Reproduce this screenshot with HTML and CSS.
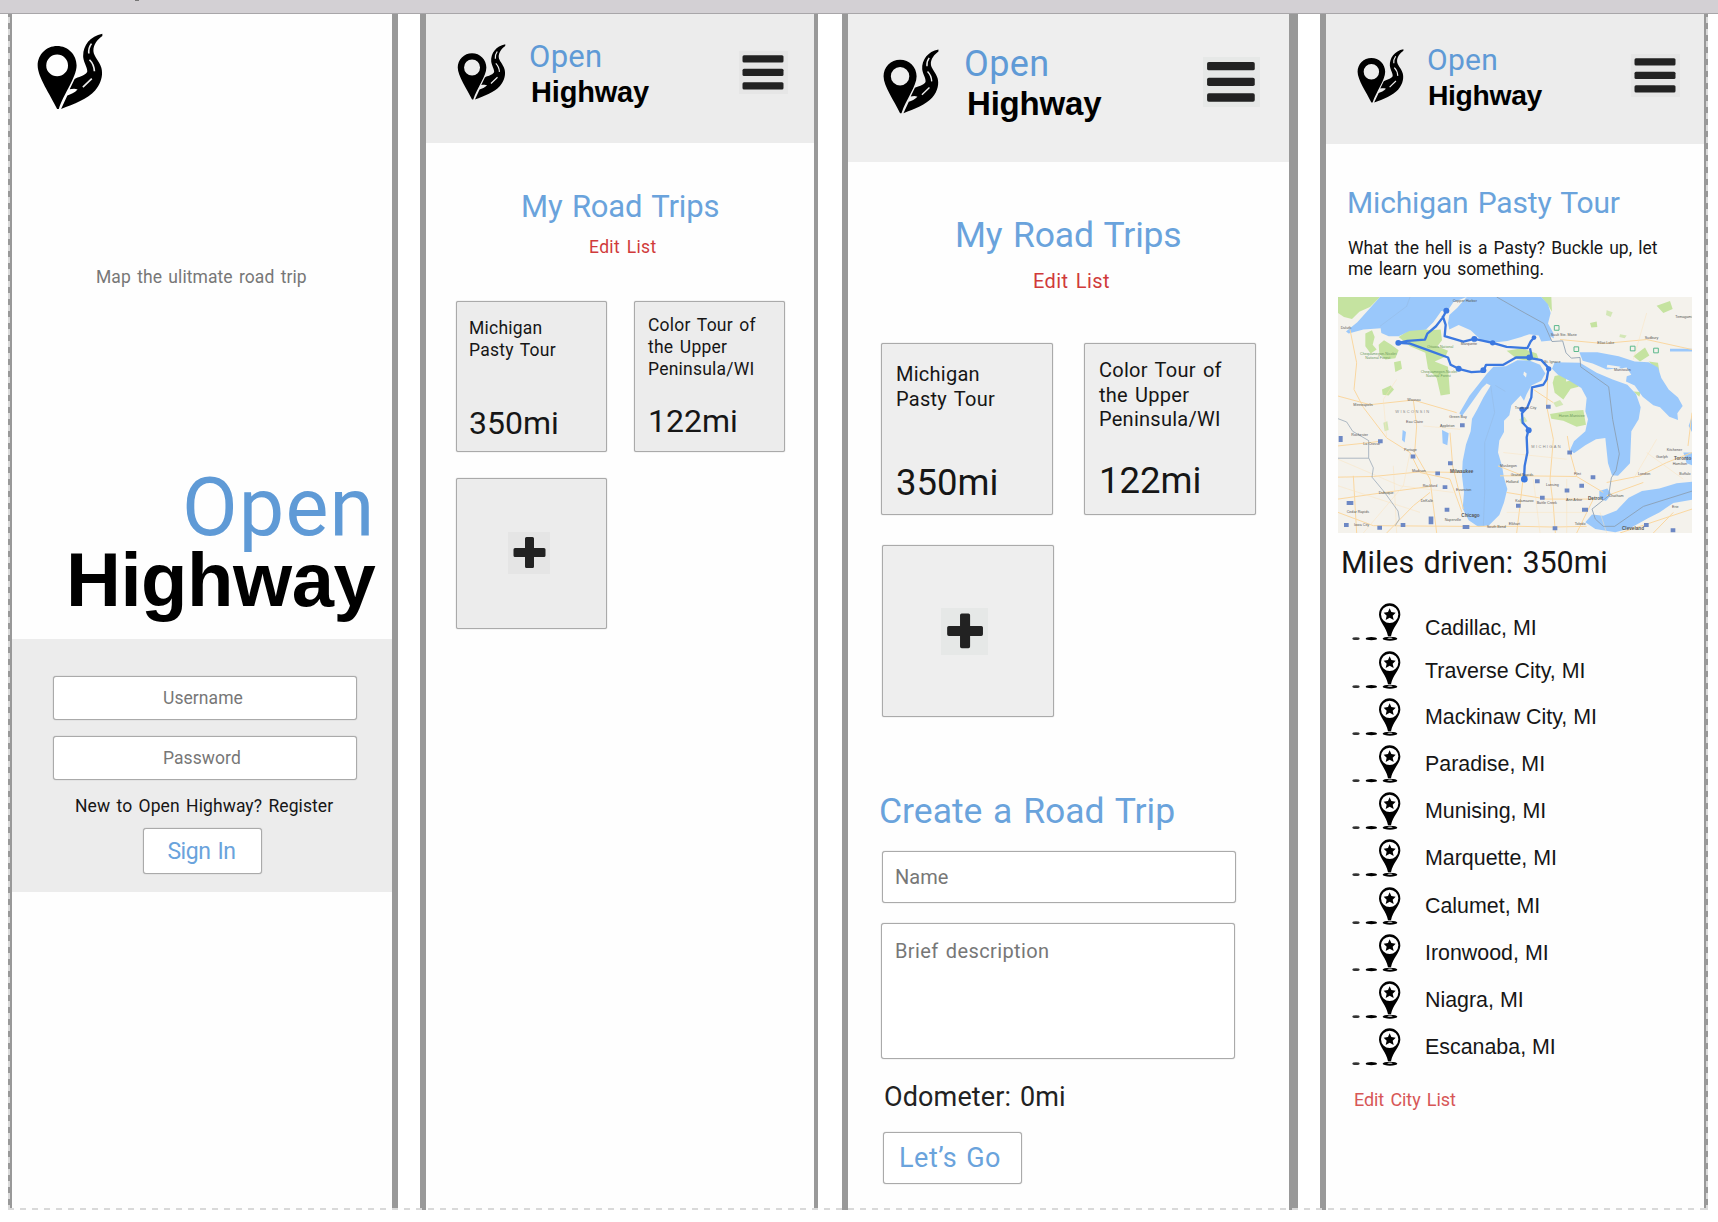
FILE: index.html
```html
<!DOCTYPE html>
<html lang="en">
<head>
<meta charset="utf-8">
<title>Open Highway</title>
<link rel="stylesheet" href="styles.css">
</head>
<body>
<svg class="defs" width="0" height="0">
  <symbol id="logo" viewBox="108 100 200 231">
    <path fill-rule="evenodd" d="M169 138C136 138 110 164 110 197C110 232 148 285 169 329L174 329C190 280 228 233 228 197C228 164 202 138 169 138ZM169 164A33 33 0 1 1 169 230A33 33 0 1 1 169 164Z"/>
    <path d="M306 101C268 108 246 138 248 172C250 190 262 204 260 217C252 230 232 232 222 238L207 269C214 268 224 266 231 270C222 280 210 284 200 288L181 329C220 314 262 298 284 273C305 249 308 222 303 204C297 183 280 170 279 154C278 134 292 118 306 108Z"/>
    <path d="M273 131Q263 145 265 161M267 180Q281 194 282 215M274 237L247 263" fill="none" stroke="#eee" stroke-width="5"/>
  </symbol>
  <symbol id="pin" viewBox="97 40 147 114">
    <path fill-rule="evenodd" d="M210 41A32 33 0 0 0 178 75C179 96 200 112 205 140H214C219 112 241 96 242 75A32 33 0 0 0 210 41ZM210 48A26 26 0 1 1 210 100A26 26 0 1 1 210 48Z"/>
    <path d="M210 56L215 67L228 69L219 78L222 91L210 84L198 91L201 78L192 69L205 67Z"/>
    <ellipse cx="211" cy="147" rx="22" ry="6"/><ellipse cx="211" cy="146" rx="8" ry="2.2" fill="#bbb"/>
    <ellipse cx="155" cy="147" rx="17" ry="5"/><ellipse cx="109" cy="147" rx="11" ry="4" fill="#333"/>
  </symbol>
  <symbol id="menu" viewBox="0 0 49 43">
    <g fill="#222"><rect x="3.500" y="4.300" width="41" height="7.200" rx="1.500"/><rect x="3.500" y="17.800" width="41" height="7.200" rx="1.500"/><rect x="3.500" y="31.200" width="41" height="7.200" rx="1.500"/></g>
  </symbol>
  <symbol id="plus" viewBox="0 0 42 42">
    <path fill="#222" d="M18.500 5h6q1.500 0 1.500 1.500V16h10q1.500 0 1.500 1.500v6q0 1.500-1.500 1.500H26v9.500q0 1.500-1.500 1.500h-6q-1.500 0-1.500-1.500V25H7q-1.500 0-1.500-1.500v-6Q5.500 16 7 16h10V6.500Q17 5 18.500 5Z"/>
  </symbol>
</svg>
<div class="topbar"></div>
<main class="board">
  <section class="phone login">
    <svg class="logo"><use href="#logo"/></svg>
    <p class="tagline">Map the ulitmate road trip</p>
    <h1 class="brand"><span class="open">Open</span><span class="highway">Highway</span></h1>
    <form class="signin">
      <div class="field">Username</div>
      <div class="field">Password</div>
      <p class="register">New to Open Highway? Register</p>
      <button type="button" class="btn">Sign In</button>
    </form>
  </section>

  <section class="phone trips">
    <header class="bar">
      <svg class="logo"><use href="#logo"/></svg>
      <h1 class="brand"><span class="open">Open</span><span class="highway">Highway</span></h1>
      <svg class="menu"><use href="#menu"/></svg>
    </header>
    <h2 class="title">My Road Trips</h2>
    <a class="edit">Edit List</a>
    <div class="cards">
      <article class="card"><p>Michigan<br>Pasty Tour</p><strong>350mi</strong></article>
      <article class="card tall"><p>Color Tour of<br>the Upper<br>Peninsula/WI</p><strong>122mi</strong></article>
      <article class="card add"><svg class="plus"><use href="#plus"/></svg></article>
    </div>
  </section>

  <section class="phone create">
    <header class="bar">
      <svg class="logo"><use href="#logo"/></svg>
      <h1 class="brand"><span class="open">Open</span><span class="highway">Highway</span></h1>
      <svg class="menu"><use href="#menu"/></svg>
    </header>
    <h2 class="title">My Road Trips</h2>
    <a class="edit">Edit List</a>
    <div class="cards">
      <article class="card"><p>Michigan<br>Pasty Tour</p><strong>350mi</strong></article>
      <article class="card tall"><p>Color Tour of<br>the Upper<br>Peninsula/WI</p><strong>122mi</strong></article>
      <article class="card add"><svg class="plus"><use href="#plus"/></svg></article>
    </div>
    <h2 class="subtitle">Create a Road Trip</h2>
    <div class="field">Name</div>
    <div class="field area">Brief description</div>
    <p class="odometer">Odometer: 0mi</p>
    <button type="button" class="btn">Let’s Go</button>
  </section>

  <section class="phone detail">
    <header class="bar">
      <svg class="logo"><use href="#logo"/></svg>
      <h1 class="brand"><span class="open">Open</span><span class="highway">Highway</span></h1>
      <svg class="menu"><use href="#menu"/></svg>
    </header>
    <h2 class="title">Michigan Pasty Tour</h2>
    <p class="desc">What the hell is a Pasty? Buckle up, let<br>me learn you something.</p>
    <svg class="map" viewBox="54 52 1062 710" preserveAspectRatio="none">
      <rect x="54" y="52" width="1062" height="710" fill="#f4f2ec"/>
      <g fill="#c5e3a0">
        <path d="M54 52H180L150 82L118 96L96 118L72 112L54 100Z"/>
        <path d="M236 172L270 150L300 146L330 152L362 150L366 182L352 200L384 214L376 232L344 246L384 262L390 344L362 348L350 296L324 268L316 220L270 200Z"/>
        <path d="M136 162L156 152L164 172L158 196L170 210L152 222L136 200ZM176 196L192 182L214 196L236 212L226 236L196 240L178 222ZM222 248L242 244L246 268L226 278ZM186 330L212 318L222 330L206 348L188 346Z"/>
        <path d="M560 214L606 206L650 222L656 240L622 244L590 238Z"/>
        <path d="M704 290L740 282L738 306L768 300L776 322L752 328L730 360L704 340L698 310Z"/>
        <path d="M690 404L740 396L790 392L798 436L770 442L730 424L694 418ZM664 52H694L696 96L682 74ZM1010 78L1050 64L1058 88L1030 100ZM940 230L975 204L988 228L960 246ZM940 336L962 338L958 352ZM810 130L830 126L832 142L814 144ZM986 246L1014 250L1018 276Z"/>
        <path d="M598 420l16-8 8 14-18 8ZM700 370l20-8 10 14-22 8ZM190 430l12-4 4 26-12 4ZM860 92l18 6-6 14-14-6ZM900 164l20 4-6 8-16-4Z" opacity=".7"/>
      </g>
      <g fill="#9ac8fb">
        <path d="M180 52H440L400 68L384 92L364 94L340 128L318 150L268 154L236 170L206 170L184 160L182 146L130 150L86 162L78 156L112 128Z"/>
        <path d="M440 52H664L684 74L692 100L684 132L700 160L702 182L664 186L656 168L628 164L604 172L562 184L516 190L486 184L452 152L416 136L388 150L384 130L388 106L412 84Z"/>
        <path d="M630 244L592 242L558 260L520 262L500 284L470 322L448 350L418 402L426 410L452 374L486 326L500 312L512 318L490 354L472 390L456 418L452 456L438 496L428 546L426 590L432 640L428 688L446 724L476 744L508 738L538 708L552 670L562 630L552 596L546 560L534 520L538 484L552 458L552 424L568 408L574 378L602 348L612 364L620 344L634 318L664 304L676 282L660 256Z"/>
        <path d="M704 248L780 250L830 280L878 300L922 316L948 344L962 384L956 420L934 456L930 552L894 590L876 588L864 552L856 476L828 480L796 498L762 522L750 512L762 486L796 456L804 420L796 396L800 356L784 326L748 304L714 286L696 268Z"/>
        <path d="M778 218L832 218L896 230L944 246L986 248L1014 264L1024 296L1046 330L1074 354L1088 380L1072 402L1074 422L1048 412L1020 384L1000 378L968 352L944 318L918 306L922 278L898 266L860 270L818 252L788 244Z"/>
        <path d="M1116 608V662L1060 672L1018 700L984 718L930 748L886 760L826 750L796 730L816 706L850 710L890 694L926 656L966 636L1018 628L1070 612Z"/>
        <path d="M838 636L862 628L874 646L858 666L838 658ZM1116 410L1106 440L1116 458ZM1090 520H1116V558L1100 552ZM366 452l20 10-4 36-14-6ZM1050 208h66v8h-66ZM248 452l10 6-4 32-8-8Z"/>
      </g>
      <g fill="#f4f2ec"><path d="M612 276l8 6-2 12-8-8ZM862 256l40 6-8 6-34-4ZM690 170l26 14-4 16-16-8ZM880 270l40-6 14 22-30 10Z"/></g>
      <g fill="none" stroke="#fad7a0" stroke-width="3">
        <path d="M90 150L110 250L102 330L130 384L200 476L270 520L300 580L390 600L426 700"/><path d="M54 350L150 376L280 362L410 400M280 362L290 440L284 520L330 600L350 762M54 594L160 592L300 578L426 580M54 660L194 640L330 622M200 762L280 680L330 640M54 700L160 740L430 742"/>
        <path d="M430 742L500 742L600 742L700 744L800 742M540 590L610 590L770 592L850 640M610 590L600 680L590 762M684 270L680 380L700 480L690 600L700 680L706 762M534 560L610 590M770 592L750 520L742 470M560 640L680 660L820 660L770 762M860 610L960 590L1040 550L1116 520M860 650L970 610M1116 400L1104 500M720 180L850 192L980 180L1116 210M640 330L700 370M900 762L1116 690M1000 762L1060 700M390 460L398 560L430 690M100 590L110 762M54 500L150 490L180 486"/>
      </g>
      <g fill="none" stroke="#fbe3bd" stroke-width="1.500"><path d="M54 540L240 620L400 640M130 762L250 620L270 520M54 620L300 700M220 560L230 762M560 700L800 700M640 600L660 762M740 600L740 762M940 600L1010 480M980 100L940 240M200 476L190 360L230 300M310 440L420 450M550 520L740 540M840 700L860 762M980 520L1090 600"/></g>
      <g fill="none" stroke="#8a9cae" stroke-width="2.500">
        <path d="M530 52L600 92L672 132L696 186L728 184L738 220L754 236L780 234L782 262L866 322L878 420L898 524L888 574L874 596L866 650L816 690L826 720L850 742L884 742L970 682L1116 636"/>
        <path d="M54 418L80 428L98 456L146 484V536L160 566L156 594L194 640L234 696L238 720L226 740M54 537H146" stroke-width="2"/>
        <path d="M512 318L524 400L494 490V640L490 740M180 140L260 80L270 52M526 318L556 336" opacity=".35" stroke-width="1.500"/>
      </g>
      <g fill="none" stroke="#3b78e0" stroke-width="7" stroke-linejoin="round">
        <path d="M379 94L368 114L348 140L322 162L315 180L262 184L236 190M368 108L377 136L374 170L430 186L463 178L518 190L560 202L622 206L632 186L642 174M236 190L270 192L330 214L384 234L392 256L416 268L454 278L490 276L498 256L550 256L588 234L622 234L664 242L686 266L680 300L670 316L636 324L634 354L622 384L606 402L608 430L626 450L620 474L622 520L614 560L612 600M630 206L636 236"/>
      </g>
      <g fill="#3b78e0"><circle cx="379" cy="93" r="9"/><circle cx="235" cy="190" r="9"/><circle cx="463" cy="178" r="9"/><circle cx="518" cy="190" r="8"/><circle cx="642" cy="174" r="7"/><circle cx="416" cy="268" r="9"/><circle cx="490" cy="272" r="9"/><circle cx="686" cy="268" r="8"/><circle cx="606" cy="390" r="8"/><circle cx="626" cy="453" r="9"/><circle cx="613" cy="600" r="10"/><circle cx="628" cy="234" r="9"/></g>
      <g fill="#6d88c4"><path d="M420 432h14v12h-14ZM174 480h14v12h-14ZM272 526h14v12h-14ZM384 546h14v12h-14ZM346 577h14v11h-14ZM368 618h14v12h-14ZM80 666h20v12h-20ZM374 686h14v12h-14ZM326 712h14v24h-14ZM72 732h14v12h-14ZM172 740h14v12h-14ZM242 732h14v12h-14ZM428 738h20v12h-20ZM645 600h14v12h-14ZM660 650h14v12h-14ZM588 674h14v12h-14ZM734 628h14v12h-14ZM778 614h14v12h-14ZM812 588h14v12h-14ZM786 686h18v12h-18ZM698 742h14v12h-14ZM972 732h14v12h-14ZM1052 748h14v12h-14ZM678 376h14v12h-14ZM742 514h14v12h-14ZM56 470h12v18h-12Z"/></g>
      <g fill="none" stroke="#5bb98c" stroke-width="3"><path d="M703 138h14v14h-14ZM762 202h14v14h-14ZM931 200h14v14h-14ZM1001 206h14v14h-14Z"/></g>
      <g class="places">
        <text x="62" y="148">Duluth</text><text x="100" y="380">Minneapolis</text><text x="262" y="364">Wausau</text><text x="258" y="430">Eau Claire</text><text x="388" y="415">Green Bay</text><text x="360" y="444">Appleton</text><text x="94" y="469">Rochester</text><text x="130" y="498">La Crosse</text><text x="252" y="515">Portage</text><text x="276" y="580">Madison</text><text class="big" x="390" y="583">Milwaukee</text><text x="308" y="624">Rockford</text><text x="408" y="636">Evanston</text><text x="176" y="645">Dubuque</text><text x="302" y="670">DeKalb</text><text class="big" x="424" y="713">Chicago</text><text x="374" y="727">Naperville</text><text x="80" y="703">Cedar Rapids</text><text x="102" y="741">Iowa City</text><text x="500" y="746">South Bend</text><text x="566" y="738">Elkhart</text><text x="540" y="564">Muskegon</text><text x="572" y="592">Grand Rapids</text><text x="558" y="612">Holland</text><text x="678" y="620">Lansing</text><text x="586" y="668">Kalamazoo</text><text x="650" y="674">Battle Creek</text><text x="738" y="667">Ann Arbor</text><text class="big" x="804" y="662">Detroit</text><text x="764" y="738">Toledo</text><text x="762" y="587">Flint</text><text class="big" x="906" y="754">Cleveland</text><text x="866" y="654">Chatham</text><text x="954" y="588">London</text><text x="1040" y="514">Kitchener</text><text class="big" x="1062" y="543">Toronto</text><text x="1058" y="558">Hamilton</text><text x="1008" y="535">Guelph</text><text x="1078" y="588">Buffalo</text><text x="1056" y="687">Erie</text><text x="974" y="178">Sudbury</text><text x="832" y="194">Elliot Lake</text><text x="692" y="170">Sault Ste. Marie</text><text x="882" y="276">Manitoulin</text><text x="1066" y="114">Temagami</text><text x="672" y="250">St. Ignace</text><text x="422" y="197">Marquette</text><text x="398" y="66">Copper Harbor</text><text x="584" y="388">Traverse City</text><text class="park" x="120" y="227">Chequamegon-Nicolet</text><text class="park" x="136" y="240">National Forest</text><text class="park" x="302" y="280">Chequamegon-Nicolet</text><text class="park" x="318" y="292">National Forest</text><text class="park" x="322" y="204">Ottawa National</text><text class="park" x="716" y="414">Huron-Manistee</text>
        <text class="state" x="226" y="402">WISCONSIN</text><text class="state" x="634" y="506">MICHIGAN</text>
      </g>
    </svg>
    <p class="miles">Miles driven: 350mi</p>
    <ul class="cities">
      <li><svg class="pin"><use href="#pin"/></svg><span>Cadillac, MI</span></li>
      <li><svg class="pin"><use href="#pin"/></svg><span>Traverse City, MI</span></li>
      <li><svg class="pin"><use href="#pin"/></svg><span>Mackinaw City, MI</span></li>
      <li><svg class="pin"><use href="#pin"/></svg><span>Paradise, MI</span></li>
      <li><svg class="pin"><use href="#pin"/></svg><span>Munising, MI</span></li>
      <li><svg class="pin"><use href="#pin"/></svg><span>Marquette, MI</span></li>
      <li><svg class="pin"><use href="#pin"/></svg><span>Calumet, MI</span></li>
      <li><svg class="pin"><use href="#pin"/></svg><span>Ironwood, MI</span></li>
      <li><svg class="pin"><use href="#pin"/></svg><span>Niagra, MI</span></li>
      <li><svg class="pin"><use href="#pin"/></svg><span>Escanaba, MI</span></li>
    </ul>
    <a class="edit">Edit City List</a>
  </section>
</main>
</body>
</html>
```
FILE: styles.css
```css
* { box-sizing: border-box; }
body { margin: 0; height: 1222px; overflow: hidden; background: #fff; color: #161616; font-family: Roboto, "Liberation Sans", sans-serif; }
h1, h2, p, ul, strong { margin: 0; padding: 0; font-weight: 400; }
svg { display: block; flex: none; }
.defs { position: absolute; }
.topbar { height: 14px; background: #d3d0d4; border-bottom: 1px solid #a8a6a9; }
/* descender of the window title, cut off by the top edge */
.topbar::before { content: ""; display: block; width: 4px; height: 1px; margin-left: 135px; background: #777; }

.board { position: relative; display: grid; grid-template-columns: 390px 398px 458px 388px; column-gap: 22px; width: 1700px; height: 1196px; margin-left: 8px; }
.board::after { content: ""; position: absolute; inset: 0; background:
  repeating-linear-gradient(180deg, #d9d9d9 0 6px, transparent 6px 12px) 0 3px / 2px 100% no-repeat,
  repeating-linear-gradient(180deg, #d9d9d9 0 6px, transparent 6px 12px) 100% 3px / 2px 100% no-repeat,
  repeating-linear-gradient(90deg, #d9d9d9 0 6px, transparent 6px 12px) 0 100% / 100% 2px no-repeat; }
.phone { display: flex; flex-direction: column; align-items: flex-start; border: 0 solid #999; background: #fefefe; word-spacing: .12em; white-space: nowrap; }
.login { border-width: 0 6px 0 4px; }
.trips { border-width: 0 4px 0 6px; }
.create { border-width: 0 9px 0 6px; margin-left: 2px; }
.detail { border-width: 0 4px 0 6px; }

.open, .highway { display: block; }
.open { color: #5f9ad6; letter-spacing: .01em; }
.highway { color: #000; font-family: "Liberation Sans", Arial, sans-serif; font-weight: 700; letter-spacing: -.006em; }
.field, .btn { border: 1px solid #aaa; border-radius: 3px; background: #fff; box-shadow: 0 0 1px #999; color: #777; }
.btn { padding: 0; font-family: inherit; color: #6aa3dc; word-spacing: inherit; text-align: center; }
.title, .subtitle { color: #6aa3dc; letter-spacing: -.005em; }
.edit { color: #d03a3a; letter-spacing: .02em; }

.login .logo { width: 66px; height: 77px; margin: 19px 0 0 25px; }
.tagline { margin: 157px 0 0 84px; font-size: 17.5px; line-height: 20px; letter-spacing: .004em; color: #777; }
.login .brand { align-self: stretch; margin-top: 181px; }
.login .open { padding-left: 170px; font-size: 81px; line-height: 80px; letter-spacing: .014em; }
.login .highway { margin-top: -3px; padding-left: 54px; font-size: 76px; line-height: 70px; }
.signin { display: flex; flex-direction: column; align-items: flex-start; align-self: stretch; height: 253px; margin-top: 24px; padding: 37px 0 0 41px; background: #ececec; }
.signin .field { width: 304px; height: 44px; margin-bottom: 16px; padding-left: 109px; font-size: 17.5px; line-height: 43px; letter-spacing: .004em; }
.register { margin-left: 22px; font-size: 17.5px; line-height: 20px; letter-spacing: .005em; }
.signin .btn { width: 119px; height: 46px; margin: 12px 0 0 90px; padding-right: 2px; font-size: 23px; letter-spacing: -.02em; }

.bar { display: flex; align-items: flex-start; align-self: stretch; background: #ececec; }
.menu { margin-left: auto; background: #e6e6e6; }
.cards { display: grid; }
.card { display: flex; flex-direction: column; justify-content: space-between; border: 1px solid #aaa; border-radius: 2px; background: #ececec; box-shadow: 0 0 1px #999; letter-spacing: .013em; }
.card strong { display: block; letter-spacing: 0; }
.plus { background: #e5e5e5; }

.trips .bar { height: 129px; }
.trips .logo { width: 49px; height: 56px; margin: 30px 0 0 31px; }
.trips .brand { margin: 25px 0 0 23px; }
.trips .open { font-size: 31px; line-height: 36px; }
.trips .highway { font-size: 29px; line-height: 34px; padding-left: 2px; }
.trips .menu { width: 49px; height: 43px; margin-top: 37px; margin-right: 26px; }
.trips .title { margin: 45px 0 0 95px; font-size: 31px; line-height: 38px; }
.trips .edit { margin: 11px 0 0 163px; font-size: 17.5px; line-height: 20px; }
.trips .cards { grid-template: 151px 151px / 151px 151px; gap: 26px 27px; margin: 44px 0 0 30px; }
.trips .card { padding: 15px 0 9px 12px; font-size: 17.5px; line-height: 22px; }
.trips .tall { padding-top: 12px; padding-bottom: 11px; padding-left: 13px; }
.trips .card strong { font-size: 32px; line-height: 38px; }
.trips .plus { width: 42px; height: 42px; margin: 38px 0 0 39px; }

.create .bar { height: 148px; background: #eee; }
.create .logo { width: 56px; height: 65px; margin: 35px 0 0 35px; }
.create .brand { margin: 29px 0 0 25px; }
.create .open { font-size: 36px; line-height: 42px; }
.create .highway { font-size: 33px; line-height: 38px; padding-left: 3px; }
.create .menu { width: 57px; height: 50px; margin-top: 43px; margin-right: 29px; background: #e6e8e7; }
.create .title { margin: 51px 0 0 107px; font-size: 35.5px; line-height: 44px; }
.create .edit { margin: 12px 0 0 185px; font-size: 20px; line-height: 24px; }
.create .cards { grid-template: 172px 172px / 172px 172px; gap: 30px 31px; margin: 50px 0 0 33px; }
.create .card { padding: 18px 0 9px 14px; font-size: 20px; line-height: 24.7px; background: #eee; }
.create .tall { padding-top: 14px; padding-bottom: 11px; }
.create .card.add { position: relative; left: 1px; }
.create .card strong { font-size: 36.5px; line-height: 44px; }
.create .plus { width: 47px; height: 47px; margin: 44px 0 0 44px; background: #e6e8e7; }
.subtitle { margin: 72px 0 0 31px; font-size: 35.5px; line-height: 44px; letter-spacing: 0; }
.create .field { width: 354px; height: 52px; margin: 18px 0 0 34px; padding-left: 12px; font-size: 20px; line-height: 51px; }
.create .area { width: 354px; height: 136px; margin: 20px 0 0 33px; padding: 15px 0 0 13px; line-height: 24px; letter-spacing: .019em; }
.odometer { margin: 22px 0 0 36px; font-size: 27px; line-height: 32px; letter-spacing: .005em; color: #222; }
.create .btn { width: 139px; height: 52px; margin: 19px 0 0 35px; padding-right: 5px; font-size: 27px; letter-spacing: .018em; }

.detail .bar { height: 130px; }
.detail .logo { width: 47px; height: 54px; margin: 35px 0 0 31px; }
.detail .brand { margin: 28px 0 0 23px; }
.detail .open { font-size: 30px; line-height: 36px; }
.detail .highway { font-size: 28.3px; line-height: 34px; padding-left: 1px; letter-spacing: -.012em; }
.detail .menu { width: 49px; height: 43px; margin-top: 40px; margin-right: 24px; }
.detail .title { margin: 40px 0 0 21px; font-size: 30px; line-height: 38px; }
.desc { margin: 16px 0 0 22px; font-size: 17.5px; line-height: 21.2px; letter-spacing: -.003em; }
.map { width: 354px; height: 236px; margin: 17px 0 0 12px; }
.places { font: 11px "Liberation Sans", sans-serif; fill: #555; word-spacing: 0; }
.places .big { font-size: 14px; font-weight: 700; }
.places .state { fill: #888; font-size: 12px; letter-spacing: 4px; }
.places .park { fill: #6d9a5c; }
.miles { margin: 12px 0 0 15px; font-size: 30.5px; line-height: 36px; letter-spacing: -.002em; }
.cities { list-style: none; margin: 22px 0 0 26px; font: 21.4px/24px "Liberation Sans", Arial, sans-serif; word-spacing: 0; }
.cities li { display: flex; height: 47.2px; gap: 24px; }
.cities span { padding-top: 7px; }
.cities li:nth-child(1) span { padding-top: 13px; }
.cities li:nth-child(2) span { padding-top: 8.4px; }
.pin { width: 49px; height: 38px; }
.detail .edit { margin: 14px 0 0 28px; font-size: 18px; line-height: 22px; letter-spacing: -.005em; color: #d75757; }
```
